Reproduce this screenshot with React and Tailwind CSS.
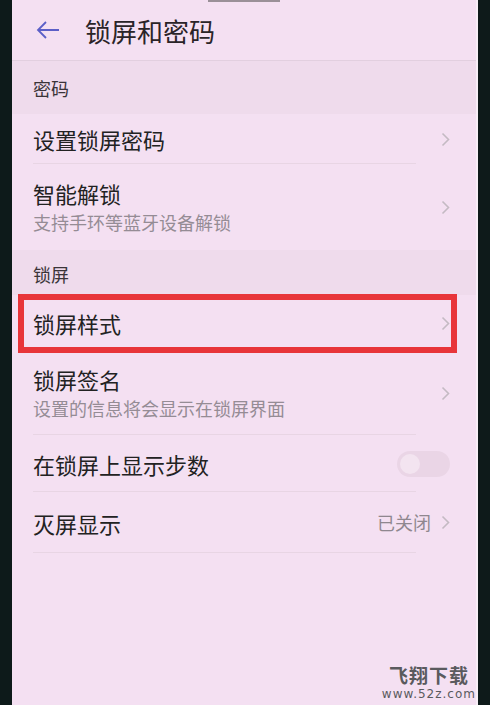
import React from 'react';

const font = { fontFamily: '"Noto Sans CJK SC", "Noto Sans", sans-serif' };

const Chevron = () => (
  <svg width="9" height="15" viewBox="0 0 9 15" className="shrink-0">
    <path d="M1.5 1.5 L7.5 7.5 L1.5 13.5" fill="none" stroke="#c4bac3" strokeWidth="1.6" />
  </svg>
);

const Section = ({ title, className }) => (
  <div className={`flex items-end pl-[21px] bg-[#efdbec] text-[18px] text-[#3a3438] ${className}`}>
    {title}
  </div>
);

const Row = ({ title, sub, right, height, divider = true }) => (
  <div className={`relative flex items-center pl-[21px] pr-[26px] ${height}`}>
    <div className="flex-1 flex flex-col">
      <span className="text-[22px] leading-[30px] text-[#222]">{title}</span>
      {sub && <span className="text-[18px] leading-[28px] text-[#958c95]">{sub}</span>}
    </div>
    {right}
    {divider && <div className="absolute left-[21px] right-[60px] bottom-0 h-px bg-[#e8d5e4]" />}
  </div>
);

export default function App() {
  return (
    <div className="w-[490px] h-[705px] flex bg-[#0e1818] overflow-hidden relative" style={font}>
      <div className="w-[12px] bg-[#0d1a1a]" />
      <div className="flex-1 flex flex-col bg-[#f4e0f2] border-r-2 border-[#f7eef6]">
        <div className="h-[61px] flex items-center border-b border-[#e2cfdf] relative">
          <div className="absolute left-[196px] top-0 w-[72px] h-[2px] bg-[#9a9098]" />
          <svg width="26" height="20" viewBox="0 0 26 20" className="ml-[23px]">
            <path d="M24 10 H3 M11 2 L3 10 L11 18" fill="none" stroke="#5b5fc7" strokeWidth="1.8" />
          </svg>
          <span className="ml-[24px] text-[26px] text-[#2a2428]">锁屏和密码</span>
        </div>
        <Section title="密码" className="h-[53px] pb-[12px]" />
        <Row title="设置锁屏密码" height="h-[50px]" right={<Chevron />} />
        <Row title="智能解锁" sub="支持手环等蓝牙设备解锁" height="h-[86px]" right={<Chevron />} divider={false} />
        <Section title="锁屏" className="h-[45px] pb-[7px]" />
        <div className="relative">
          <Row title="锁屏样式" height="h-[56px]" right={<Chevron />} divider={false} />
          <div className="absolute left-[6px] right-[19px] top-[-1px] bottom-[-2px] border-[6px] border-[#e8353a]" />
        </div>
        <Row title="锁屏签名" sub="设置的信息将会显示在锁屏界面" height="h-[84px]" right={<Chevron />} />
        <Row
          title="在锁屏上显示步数"
          height="h-[57px]"
          right={
            <div className="w-[53px] h-[26px] rounded-full bg-[#ead5e6] flex items-center pl-[3px]">
              <div className="w-[20px] h-[20px] rounded-full bg-[#f3e4f0]" />
            </div>
          }
        />
        <Row
          title="灭屏显示"
          height="h-[61px]"
          right={
            <div className="flex items-center gap-[10px]">
              <span className="text-[18px] text-[#8f878f]">已关闭</span>
              <Chevron />
            </div>
          }
        />
        <div className="flex-1" />
      </div>
      <div className="w-[12px] bg-[#0e1a1a]" />
      <div className="absolute right-[14px] bottom-[4px] flex flex-col items-center">
        <span className="text-[19px] leading-[20px] font-bold text-[#5a5a5e] tracking-[1px]">飞翔下载</span>
        <span className="text-[12px] leading-[13px] text-[#5a5a5e] tracking-[1px] mt-[3px]" style={{ fontFamily: '"DejaVu Sans", sans-serif' }}>www.52z.com</span>
      </div>
    </div>
  );
}
